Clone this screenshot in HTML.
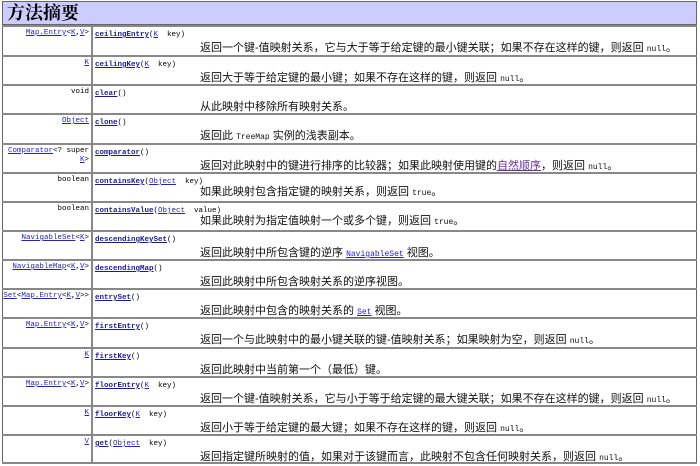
<!DOCTYPE html>
<html><head><meta charset="utf-8"><style>
body{margin:0;width:700px;height:466px;overflow:hidden;background:#fff;font-family:"Liberation Serif","Noto Serif CJK SC",serif;}
.wrap{position:absolute;left:2px;top:1px;width:695px;height:463px;border:1px solid #666;box-sizing:border-box;}
.hd{position:absolute;left:2px;top:1px;width:695px;height:24px;background:#ccccff;border:1px solid #666;box-sizing:border-box;font-size:18px;font-weight:bold;line-height:22px;padding-left:4px;color:#000;font-family:"Liberation Serif","Noto Serif CJK SC",serif;}
.row{position:absolute;left:2px;width:695px;border-top:2px solid #888;box-sizing:border-box;}
.l{position:absolute;right:608px;top:2px;font:7.5px/9px "Liberation Mono",monospace;text-align:right;white-space:nowrap;}
.sep{position:absolute;left:89px;top:0;bottom:0;border-left:2px solid #888;}
.s{position:absolute;left:93px;top:4px;font:7.5px/9px "Liberation Mono",monospace;white-space:pre;}
.s b{color:#1a1aa0;text-decoration:underline;font-weight:bold;}
.d{position:absolute;left:198px;top:14px;font:11px/14px "Liberation Sans","Noto Sans CJK SC",sans-serif;white-space:pre;color:#111;}
.d.n{top:11px}
a{color:#2222cc;text-decoration:underline}
code{font:8px "Liberation Mono",monospace}
</style></head><body>
<div class="hd">方法摘要</div>
<div class="wrap"></div>
<div class="row" style="top:25px;height:30px"><div class="sep"></div><div class="l"><a>Map.Entry</a>&lt;<a>K</a>,<a>V</a>&gt;</div><div class="s"><b>ceilingEntry</b>(<a>K</a>  key)</div><div class="d">返回一个键-值映射关系，它与大于等于给定键的最小键关联；如果不存在这样的键，则返回 <code>null</code>。</div></div>
<div class="row" style="top:55px;height:29px"><div class="sep"></div><div class="l"><a>K</a></div><div class="s"><b>ceilingKey</b>(<a>K</a>  key)</div><div class="d">返回大于等于给定键的最小键；如果不存在这样的键，则返回 <code>null</code>。</div></div>
<div class="row" style="top:84px;height:29px"><div class="sep"></div><div class="l">void</div><div class="s"><b>clear</b>()</div><div class="d">从此映射中移除所有映射关系。</div></div>
<div class="row" style="top:113px;height:30px"><div class="sep"></div><div class="l"><a>Object</a></div><div class="s"><b>clone</b>()</div><div class="d">返回此 <code>TreeMap</code> 实例的浅表副本。</div></div>
<div class="row" style="top:143px;height:29px"><div class="sep"></div><div class="l"><a>Comparator</a>&lt;? super<br><a>K</a>&gt;</div><div class="s"><b>comparator</b>()</div><div class="d">返回对此映射中的键进行排序的比较器；如果此映射使用键的<a style="color:#663399">自然顺序</a>，则返回 <code>null</code>。</div></div>
<div class="row" style="top:172px;height:29px"><div class="sep"></div><div class="l">boolean</div><div class="s"><b>containsKey</b>(<a>Object</a>  key)</div><div class="d n">如果此映射包含指定键的映射关系，则返回 <code>true</code>。</div></div>
<div class="row" style="top:201px;height:29px"><div class="sep"></div><div class="l">boolean</div><div class="s"><b>containsValue</b>(<a>Object</a>  value)</div><div class="d n">如果此映射为指定值映射一个或多个键，则返回 <code>true</code>。</div></div>
<div class="row" style="top:230px;height:29px"><div class="sep"></div><div class="l"><a>NavigableSet</a>&lt;<a>K</a>&gt;</div><div class="s"><b>descendingKeySet</b>()</div><div class="d">返回此映射中所包含键的逆序 <a><code>NavigableSet</code></a> 视图。</div></div>
<div class="row" style="top:259px;height:29px"><div class="sep"></div><div class="l"><a>NavigableMap</a>&lt;<a>K</a>,<a>V</a>&gt;</div><div class="s"><b>descendingMap</b>()</div><div class="d">返回此映射中所包含映射关系的逆序视图。</div></div>
<div class="row" style="top:288px;height:29px"><div class="sep"></div><div class="l"><a>Set</a>&lt;<a>Map.Entry</a>&lt;<a>K</a>,<a>V</a>&gt;&gt;</div><div class="s"><b>entrySet</b>()</div><div class="d">返回此映射中包含的映射关系的 <a><code>Set</code></a> 视图。</div></div>
<div class="row" style="top:317px;height:30px"><div class="sep"></div><div class="l"><a>Map.Entry</a>&lt;<a>K</a>,<a>V</a>&gt;</div><div class="s"><b>firstEntry</b>()</div><div class="d">返回一个与此映射中的最小键关联的键-值映射关系；如果映射为空，则返回 <code>null</code>。</div></div>
<div class="row" style="top:347px;height:29px"><div class="sep"></div><div class="l"><a>K</a></div><div class="s"><b>firstKey</b>()</div><div class="d">返回此映射中当前第一个（最低）键。</div></div>
<div class="row" style="top:376px;height:29px"><div class="sep"></div><div class="l"><a>Map.Entry</a>&lt;<a>K</a>,<a>V</a>&gt;</div><div class="s"><b>floorEntry</b>(<a>K</a>  key)</div><div class="d">返回一个键-值映射关系，它与小于等于给定键的最大键关联；如果不存在这样的键，则返回 <code>null</code>。</div></div>
<div class="row" style="top:405px;height:29px"><div class="sep"></div><div class="l"><a>K</a></div><div class="s"><b>floorKey</b>(<a>K</a>  key)</div><div class="d">返回小于等于给定键的最大键；如果不存在这样的键，则返回 <code>null</code>。</div></div>
<div class="row" style="top:434px;height:30px;border-bottom:2px solid #888"><div class="sep"></div><div class="l"><a>V</a></div><div class="s"><b>get</b>(<a>Object</a>  key)</div><div class="d">返回指定键所映射的值，如果对于该键而言，此映射不包含任何映射关系，则返回 <code>null</code>。</div></div>
</body></html>
